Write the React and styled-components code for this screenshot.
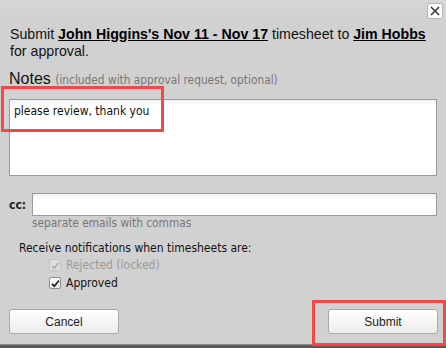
import React from 'react';
import styled, {createGlobalStyle} from 'styled-components';

const GlobalStyle = createGlobalStyle`
	html, body {
		margin: 0;
		padding: 0;
		background: #5a5a5a;
	}
	#root {
		width: 446px;
		height: 348px;
		overflow: hidden;
	}
`;

const Dialog = styled.div`
	position: relative;
	width: 446px;
	height: 345px;
	box-sizing: border-box;
	background: #d1d1d1;
	border-bottom: 1px solid #8c8c8c;
	display: flex;
	flex-direction: column;
	font-family: "Liberation Sans", Arial, sans-serif;
	color: #111;
`;

const TitleBar = styled.div`
	height: 22px;
	display: flex;
	justify-content: flex-end;
	align-items: flex-start;
	padding: 3px 3px 0 0;
	box-sizing: border-box;
	background: linear-gradient(#d6d6d6, #d1d1d1);
`;

const CloseButton = styled.button`
	width: 16px;
	height: 16px;
	padding: 0;
	border: 1px solid #b5b5b5;
	border-radius: 2px;
	background: #fafafa;
	display: flex;
	align-items: center;
	justify-content: center;
`;

const Body = styled.div`
	flex: 1;
	display: flex;
	flex-direction: column;
	padding: 4px 9px 0 9px;
`;

const Intro = styled.p`
	margin: 0 0 0 1px;
	font-size: 14.2px;
	line-height: 17px;
	color: #111;
`;

const Strong = styled.b`
	text-decoration: underline;
	color: #000;
`;

const NotesLabel = styled.div`
	margin-top: 10px;
	font-size: 16px;
	line-height: 18px;
	color: #111;
`;

const Hint = styled.span`
	font-family: "DejaVu Sans Condensed", "DejaVu Sans", sans-serif;
	font-size: 11.8px;
	color: #777;
	margin-left: ${p => p.$indent || 0}px;
`;

const NotesBox = styled.div`
	margin-top: 10px;
	height: 77px;
	box-sizing: border-box;
	border: 1px solid #9a9a9a;
	background: linear-gradient(#eef1f3, #fff 5px);
	padding: 4px 4px;
	font-family: "DejaVu Sans Condensed", "DejaVu Sans", sans-serif;
	font-size: 12px;
	color: #111;
`;

const CcRow = styled.div`
	margin-top: 17px;
	display: flex;
	align-items: center;
	gap: 3px;
`;

const CcLabel = styled.label`
	width: 20px;
	font-family: "DejaVu Sans Condensed", "DejaVu Sans", sans-serif;
	font-weight: bold;
	font-size: 12px;
	color: #222;
`;

const TextInput = styled.div`
	flex: 1;
	height: 23px;
	box-sizing: border-box;
	border: 1px solid #9a9a9a;
	background: linear-gradient(#eef1f3, #fff 6px);
`;

const HintLine = styled.div`
	margin-top: -1px;
	line-height: 13px;
`;

const Section = styled.div`
	margin-top: 11px;
	padding-left: 10px;
	display: flex;
	flex-direction: column;
	gap: 3px;
	font-family: "DejaVu Sans Condensed", "DejaVu Sans", sans-serif;
	font-size: 12px;
	color: #111;
`;

const CheckList = styled.div`
	padding-left: 30px;
	display: flex;
	flex-direction: column;
	gap: 4px;
`;

const CheckRow = styled.label`
	display: flex;
	align-items: center;
	gap: 5px;
	height: 14px;
	color: ${p => (p.$disabled ? '#9a9a9a' : '#111')};
`;

const Box = styled.span`
	width: 12px;
	height: 12px;
	box-sizing: border-box;
	border: 1px solid ${p => (p.$disabled ? '#c4c4c4' : '#8f8f8f')};
	border-radius: 2px;
	background: ${p => (p.$disabled ? '#dedede' : 'linear-gradient(#fff, #e4e4e4)')};
	display: flex;
	align-items: center;
	justify-content: center;
`;

const Footer = styled.div`
	margin-top: auto;
	padding: 0 8px 10px 9px;
	display: flex;
	justify-content: space-between;
`;

const Button = styled.button`
	width: 110px;
	height: 25px;
	border: 1px solid #a9a9a9;
	border-radius: 3px;
	background: linear-gradient(#ffffff, #ececec);
	font-family: "Liberation Sans", Arial, sans-serif;
	font-size: 12px;
	color: #222;
`;

const Highlight = styled.div`
	position: absolute;
	box-sizing: border-box;
	border: 3px solid #f4474a;
	pointer-events: none;
`;

const Check = ({disabled}) => (
	<Box $disabled={disabled}>
		<svg width="9" height="9" viewBox="0 0 9 9">
			<path
				d="M1 4.8 L3.3 7.2 L8 1.5"
				fill="none"
				stroke={disabled ? '#b0b0b0' : '#222'}
				strokeWidth="1.8"
			/>
		</svg>
	</Box>
);

export default function App() {
	return (
		<>
			<GlobalStyle/>
			<Dialog>
				<TitleBar>
					<CloseButton aria-label="close">
						<svg width="10" height="10" viewBox="0 0 10 10">
							<path d="M1 1 L9 9 M9 1 L1 9" stroke="#333" strokeWidth="1.5"/>
						</svg>
					</CloseButton>
				</TitleBar>
				<Body>
					<Intro>
						Submit <Strong>John Higgins's Nov 11 - Nov 17</Strong> timesheet to{' '}
						<Strong>Jim Hobbs</Strong> for approval.
					</Intro>
					<NotesLabel>
						Notes <Hint>(included with approval request, optional)</Hint>
					</NotesLabel>
					<NotesBox>please review, thank you</NotesBox>
					<CcRow>
						<CcLabel>cc:</CcLabel>
						<TextInput/>
					</CcRow>
					<HintLine>
						<Hint $indent={23}>separate emails with commas</Hint>
					</HintLine>
					<Section>
						<div>Receive notifications when timesheets are:</div>
						<CheckList>
							<CheckRow $disabled>
								<Check disabled/>
								Rejected (locked)
							</CheckRow>
							<CheckRow>
								<Check/>
								Approved
							</CheckRow>
						</CheckList>
					</Section>
				</Body>
				<Footer>
					<Button>Cancel</Button>
					<Button>Submit</Button>
				</Footer>
				<Highlight style={{left: 1, top: 86, width: 163, height: 46}}/>
				<Highlight style={{left: 312, top: 300, width: 134, height: 46}}/>
			</Dialog>
		</>
	);
}
